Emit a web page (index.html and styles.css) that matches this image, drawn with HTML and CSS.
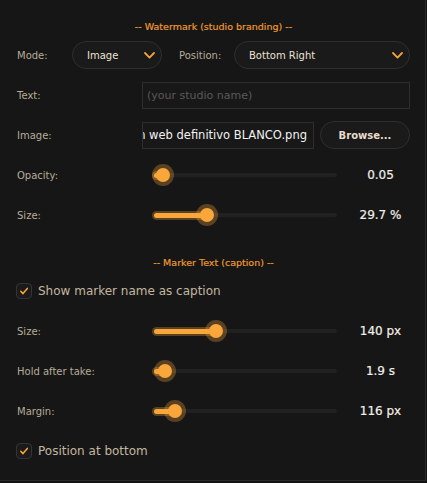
FILE: index.html
```html
<!DOCTYPE html>
<html>
<head>
<meta charset="utf-8">
<link rel="stylesheet" href="styles.css">
</head>
<body>
<div class="panel">
  <div class="section-title first">-- Watermark (studio branding) --</div>

  <div class="row">
    <span class="label mode-label">Mode:</span>
    <div class="combo combo-mode">
      <span class="combo-text">Image</span>
      <svg class="chev" width="11" height="7" viewBox="0 0 11 7"><polyline points="1,1 5.5,5.6 10,1" fill="none" stroke="#f4a236" stroke-width="1.8" stroke-linecap="round" stroke-linejoin="round"/></svg>
    </div>
    <span class="label pos-label">Position:</span>
    <div class="combo combo-pos">
      <span class="combo-text">Bottom Right</span>
      <svg class="chev" width="11" height="7" viewBox="0 0 11 7"><polyline points="1,1 5.5,5.6 10,1" fill="none" stroke="#f4a236" stroke-width="1.8" stroke-linecap="round" stroke-linejoin="round"/></svg>
    </div>
  </div>

  <div class="row">
    <span class="label col-label">Text:</span>
    <div class="field field-text"><span class="placeholder">(your studio name)</span></div>
  </div>

  <div class="row">
    <span class="label col-label">Image:</span>
    <div class="field field-file"><span class="file-name">Logo version web definitivo BLANCO.png</span></div>
    <div class="btn">Browse...</div>
  </div>

  <div class="row">
    <span class="label slider-label">Opacity:</span>
    <div class="slider" style="--v: 9px">
      <div class="track"></div><div class="fill"></div><div class="thumb"></div>
    </div>
    <span class="value">0.05</span>
  </div>

  <div class="row">
    <span class="label slider-label">Size:</span>
    <div class="slider" style="--v: 53px">
      <div class="track"></div><div class="fill"></div><div class="thumb"></div>
    </div>
    <span class="value">29.7 %</span>
  </div>

  <div class="section-title second">-- Marker Text (caption) --</div>

  <div class="row">
    <div class="checkbox">
      <svg width="10" height="10" viewBox="0 0 10 10"><polyline points="1.8,5.3 4,7.6 8.3,2.4" fill="none" stroke="#f4a236" stroke-width="1.6" stroke-linecap="round" stroke-linejoin="round"/></svg>
    </div>
    <span class="check-label">Show marker name as caption</span>
  </div>

  <div class="row">
    <span class="label slider-label">Size:</span>
    <div class="slider" style="--v: 62px">
      <div class="track"></div><div class="fill"></div><div class="thumb"></div>
    </div>
    <span class="value">140 px</span>
  </div>

  <div class="row">
    <span class="label slider-label">Hold after take:</span>
    <div class="slider" style="--v: 11px">
      <div class="track"></div><div class="fill"></div><div class="thumb"></div>
    </div>
    <span class="value">1.9 s</span>
  </div>

  <div class="row">
    <span class="label slider-label">Margin:</span>
    <div class="slider" style="--v: 21px">
      <div class="track"></div><div class="fill"></div><div class="thumb"></div>
    </div>
    <span class="value">116 px</span>
  </div>

  <div class="row">
    <div class="checkbox">
      <svg width="10" height="10" viewBox="0 0 10 10"><polyline points="1.8,5.3 4,7.6 8.3,2.4" fill="none" stroke="#f4a236" stroke-width="1.6" stroke-linecap="round" stroke-linejoin="round"/></svg>
    </div>
    <span class="check-label">Position at bottom</span>
  </div>
</div>
</body>
</html>
```

FILE: styles.css
```css
html, body {
  margin: 0;
  padding: 0;
  background: #131313;
}

body {
  font-family: "DejaVu Sans", "Noto Sans", sans-serif;
}

.panel {
  box-sizing: border-box;
  width: 426px;
  height: 481px;
  background: #161616;
  border-right: 1px solid #2a2a2a;
  border-bottom: 1px solid #2a2a2a;
  padding: 0 15px 0 17px;
  display: flex;
  flex-direction: column;
}

.section-title {
  height: 14px;
  line-height: 14px;
  text-align: center;
  color: #eb992f;
  font-size: 9.5px;
  font-weight: normal;
  -webkit-text-stroke: 0.2px #eb992f;
}

.section-title.first {
  margin-top: 20px;
  margin-bottom: 7px;
}

.section-title.second {
  margin-top: 15px;
  margin-bottom: 7px;
}

.row {
  height: 28px;
  display: flex;
  align-items: center;
  margin-bottom: 12px;
  flex-shrink: 0;
}

.label {
  color: #b7ac98;
  font-size: 10px;
  white-space: nowrap;
  flex-shrink: 0;
}

.mode-label { width: 55px; }
.pos-label { width: 55px; margin-left: 17px; }
.col-label { width: 125px; }
.slider-label { width: 137px; }

.combo {
  box-sizing: border-box;
  height: 28px;
  border: 1px solid #2f2f2f;
  border-radius: 14px;
  background: #1a1a1a;
  display: flex;
  align-items: center;
  justify-content: space-between;
  padding: 0 6px 0 14px;
}

.combo-mode { width: 90px; }
.combo-pos { flex: 1; }

.combo-text {
  color: #ece2d2;
  font-size: 10px;
}

.chev { display: block; }

.field {
  box-sizing: border-box;
  height: 27px;
  border: 1px solid #2e2e2e;
  background: #181818;
  display: flex;
  align-items: center;
  overflow: hidden;
  white-space: nowrap;
}

.field-text {
  flex: 1;
  padding-left: 4px;
}

.placeholder {
  color: #5c5853;
  font-size: 11px;
}

.field-file {
  width: 172px;
  flex-shrink: 0;
  justify-content: flex-end;
  padding-right: 6px;
}

.file-name {
  color: #f2f2f2;
  font-size: 11.5px;
  flex-shrink: 0;
}

.btn {
  box-sizing: border-box;
  width: 90px;
  height: 28px;
  margin-left: 6px;
  border: 1px solid #2f2f2f;
  border-radius: 14px;
  background: #1a1a1a;
  color: #e9ddcb;
  font-size: 10px;
  font-weight: bold;
  display: flex;
  align-items: center;
  justify-content: center;
}

.slider {
  position: relative;
  width: 183px;
  height: 28px;
  flex-shrink: 0;
}

.track {
  position: absolute;
  left: 0;
  right: 0;
  top: 12px;
  height: 4px;
  border-radius: 2px;
  background: #212121;
}

.fill {
  position: absolute;
  left: 0;
  top: 11.5px;
  height: 5px;
  width: var(--v);
  border-radius: 3px;
  background: #f9a63a;
  box-shadow: 0 0 0 2px rgba(249, 166, 58, 0.3);
}

.thumb {
  position: absolute;
  top: 7px;
  left: calc(var(--v) - 7px);
  width: 14px;
  height: 14px;
  border-radius: 50%;
  background: #f9a63a;
  box-shadow: 0 0 0 4px rgba(249, 166, 58, 0.3);
}

.value {
  flex: 1;
  padding-left: 14px;
  text-align: center;
  color: #f3efe9;
  font-size: 12px;
  white-space: nowrap;
  -webkit-text-stroke: 0.2px #f3efe9;
}

.checkbox {
  box-sizing: border-box;
  width: 16px;
  height: 16px;
  margin-left: -1px;
  border: 1px solid #343434;
  border-radius: 4px;
  background: #1b1b1b;
  display: flex;
  align-items: center;
  justify-content: center;
  flex-shrink: 0;
}

.checkbox svg { display: block; }

.check-label {
  margin-left: 6px;
  color: #c3b6a1;
  font-size: 12px;
  white-space: nowrap;
}
```
